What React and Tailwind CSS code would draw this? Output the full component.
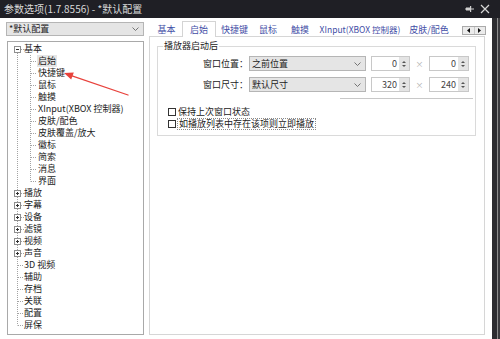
import React from 'react';

const TREE = [
  { t: '基本', lv: 0, box: 'open', first: true },
  { t: '启始', lv: 1, sel: true },
  { t: '快捷键', lv: 1 },
  { t: '鼠标', lv: 1 },
  { t: '触摸', lv: 1 },
  { t: 'XInput(XBOX 控制器)', lv: 1 },
  { t: '皮肤/配色', lv: 1 },
  { t: '皮肤覆盖/放大', lv: 1 },
  { t: '徽标', lv: 1 },
  { t: '简索', lv: 1 },
  { t: '消息', lv: 1 },
  { t: '界面', lv: 1, last: true },
  { t: '播放', lv: 0, box: 'closed' },
  { t: '字幕', lv: 0, box: 'closed' },
  { t: '设备', lv: 0, box: 'closed' },
  { t: '滤镜', lv: 0, box: 'closed' },
  { t: '视频', lv: 0, box: 'closed' },
  { t: '声音', lv: 0, box: 'closed' },
  { t: '3D 视频', lv: 0 },
  { t: '辅助', lv: 0 },
  { t: '存档', lv: 0 },
  { t: '关联', lv: 0 },
  { t: '配置', lv: 0 },
  { t: '屏保', lv: 0, last: true },
];

const TABS = [
  { t: '基本', w: 'w-[31px]' },
  { t: '启始', w: 'w-[34px]', sel: true },
  { t: '快捷键', w: 'w-[37px]' },
  { t: '鼠标', w: 'w-[30px]' },
  { t: '触摸', w: 'w-[34px]' },
  { t: 'XInput(XBOX 控制器)', w: 'w-[86px] text-[8.5px]' },
  { t: '皮肤/配色', w: 'w-[52px]' },
];

const DOT = { stroke: '#a3a3a3', strokeWidth: 1, strokeDasharray: '1 1' };

function Conn({ row }) {
  if (row.lv === 1) {
    return (
      <svg width="30" height="12" className="shrink-0">
        <line x1="9.5" y1="0" x2="9.5" y2="12" {...DOT} />
        <line x1="22.5" y1="0" x2="22.5" y2={row.last ? 6.5 : 12} {...DOT} />
        <line x1="23" y1="6.5" x2="29" y2="6.5" {...DOT} />
      </svg>
    );
  }
  return (
    <svg width="16" height="12" className="shrink-0">
      <line x1="9.5" y1={row.first ? 6 : 0} x2="9.5" y2={row.last ? 6.5 : 12} {...DOT} />
      {row.box ? (
        <>
          <rect x="6.5" y="3.5" width="6" height="6" fill="#fff" stroke="#8f8f8f" />
          <line x1="8" y1="6.5" x2="11" y2="6.5" stroke="#333" />
          {row.box === 'closed' && <line x1="9.5" y1="5" x2="9.5" y2="8" stroke="#333" />}
          <line x1="13" y1="6.5" x2="16" y2="6.5" {...DOT} />
        </>
      ) : (
        <line x1="10" y1="6.5" x2="16" y2="6.5" {...DOT} />
      )}
    </svg>
  );
}

function Chevron() {
  return (
    <svg width="7" height="4" viewBox="0 0 7 4" className="shrink-0">
      <path d="M0.5 0.5 L3.5 3.5 L6.5 0.5" fill="none" stroke="#666" strokeWidth="0.9" />
    </svg>
  );
}

function Spinner({ value, w }) {
  return (
    <div className={`${w} h-[15px] flex border border-[#c8c8c8] bg-white`}>
      <div className="flex-1 text-right pr-[2px] leading-[13px] text-[#444]">{value}</div>
      <div className="w-[10px] bg-[#e4e4e4] flex flex-col items-center justify-center gap-[2px]">
        <svg width="4" height="2" viewBox="0 0 4 2"><path d="M0 2 L2 0 L4 2Z" fill="#555" /></svg>
        <svg width="4" height="2" viewBox="0 0 4 2"><path d="M0 0 L2 2 L4 0Z" fill="#555" /></svg>
      </div>
    </div>
  );
}

function FieldRow({ label, value, a, b }) {
  return (
    <div className="flex h-[15px] items-center">
      <div className="w-[90px] text-right leading-[15px] text-[#222]">{label}</div>
      <div className="ml-[1px] w-[117px] h-[15px] flex items-center justify-between bg-[#e5e5e5] border border-[#b5b5b5] pl-[2px] pr-[4px]">
        <span className="leading-[13px] text-[#222]">{value}</span>
        <Chevron />
      </div>
      <div className="ml-[5px]"><Spinner value={a} w="w-[39px]" /></div>
      <div className="w-[19px] text-center text-[#b0b0b0] text-[8px]">×</div>
      <Spinner value={b} w="w-[40px]" />
    </div>
  );
}

export default function App() {
  return (
    <div className="w-[500px] h-[339px] overflow-hidden flex flex-col bg-white font-['Noto_Sans_CJK_SC',sans-serif] text-[9px] text-[#1c1c1c]">
      {/* title bar */}
      <div className="h-[18px] shrink-0 bg-[#1f1f25] flex items-center justify-between pl-[4px] pr-[10px]">
        <span className="text-[10px] text-[#dadada] leading-[18px]">参数选项(1.7.8556) - *默认配置</span>
        <div className="flex items-center gap-[6px]">
          <svg width="9" height="7" viewBox="0 0 9 7">
            <rect x="1" y="1.5" width="4" height="3" fill="#cfcfcf" />
            <rect x="5" y="0" width="1.2" height="6" fill="#cfcfcf" />
            <rect x="6" y="2.5" width="3" height="1" fill="#cfcfcf" />
            <rect x="0" y="2.5" width="1" height="1" fill="#cfcfcf" />
          </svg>
          <svg width="10" height="10" viewBox="0 0 10 10">
            <path d="M1 1 L9 9 M9 1 L1 9" stroke="#d6d6d6" strokeWidth="1.2" />
          </svg>
        </div>
      </div>

      <div className="flex flex-1">
        <div className="w-[492px] flex relative">
          {/* left column */}
          <div className="w-[149px] pl-[6px] pt-[4px] shrink-0">
            <div className="w-[138px] h-[14px] flex items-center justify-between bg-[#e5e5e5] border border-[#b5b5b5] pl-[2px] pr-[4px]">
              <span className="leading-[12px] text-[#222]">*默认配置</span>
              <Chevron />
            </div>
            <div className="mt-[5px] ml-[1px] w-[137px] h-[294px] border border-[#a9a9a9] pt-[1px] bg-white">
              {TREE.map((r, i) => (
                <div key={i} className="h-[12px] flex items-center">
                  <Conn row={r} />
                  <span className={`leading-[12px] whitespace-nowrap ${r.sel ? 'bg-[#e6e6e6] -ml-[1px] px-[1px]' : ''}`}>{r.t}</span>
                </div>
              ))}
            </div>
          </div>

          {/* red arrow annotation */}
          <svg className="absolute left-0 top-0 pointer-events-none" width="150" height="120" viewBox="0 18 150 120">
            <line x1="72" y1="75.8" x2="128" y2="95" stroke="#e8423c" strokeWidth="1.3" strokeLinecap="round" />
            <path d="M64 73 L71.2 79.4 L73.8 72.4Z" fill="#e8423c" />
          </svg>

          {/* right column */}
          <div className="w-[338px] pt-[3px] shrink-0">
            <div className="h-[15px] flex items-end pl-[2px]">
              {TABS.map((t) =>
                t.sel ? (
                  <div key={t.t} className={`${t.w} h-[16px] -mb-[1px] relative z-10 bg-white border border-b-0 border-[#d4d4d4] flex items-center justify-center text-[#3f4ea6] leading-[14px]`}>
                    {t.t}
                  </div>
                ) : (
                  <div key={t.t} className={`${t.w} h-[13px] flex items-center justify-center whitespace-nowrap text-[#3f4ea6] leading-[13px]`}>
                    {t.t}
                  </div>
                )
              )}
              <div className="ml-[7px] mb-[1px] h-[9px] w-[24px] flex border border-[#aaaaaa] bg-[#ebebeb]">
                <div className="flex-1 flex items-center justify-center border-r border-[#c8c8c8]">
                  <svg width="3" height="5" viewBox="0 0 3 5"><path d="M3 0 L0 2.5 L3 5Z" fill="#111" /></svg>
                </div>
                <div className="flex-1 flex items-center justify-center">
                  <svg width="3" height="5" viewBox="0 0 3 5"><path d="M0 0 L3 2.5 L0 5Z" fill="#111" /></svg>
                </div>
              </div>
            </div>

            <div className="w-[336px] h-[299px] border border-[#d6d6d6] bg-white">
              <div className="ml-[7px] mt-[9px] w-[319px] h-[90px] border border-[#dadada] relative">
                <span className="absolute -top-[7px] left-[5px] px-[1px] bg-white leading-[12px] text-[#222]">播放器启动后</span>
                <div className="pt-[9px] flex flex-col gap-[6px]">
                  <FieldRow label="窗口位置：" value="之前位置" a="0" b="0" />
                  <FieldRow label="窗口尺寸：" value="默认尺寸" a="320" b="240" />
                </div>
                <div className="mt-[6px] ml-[182px] w-[133px] h-px bg-[#c8c8c8]" />
                <div className="mt-[8px] h-[10px] flex items-center pl-[10px]">
                  <div className="w-[8px] h-[8px] border border-[#333] bg-white" />
                  <span className="ml-[2px] leading-[10px] text-[#222]">保持上次窗口状态</span>
                </div>
                <div className="mt-[1px] h-[12px] flex items-center pl-[10px]">
                  <div className="w-[8px] h-[8px] border border-[#333] bg-white" />
                  <span className="ml-[1px] border border-dotted border-[#8a8a8a] px-[1px] leading-[10px] text-[#222]">如播放列表中存在该项则立即播放</span>
                </div>
              </div>
            </div>
          </div>
        </div>

        {/* dark window edge */}
        <div className="w-[8px] flex">
          <div className="w-[5px] bg-[#2c2c30]" />
          <div className="w-[1px] bg-[#8e8e8e]" />
          <div className="w-[2px] bg-[#3a3a3e]" />
        </div>
      </div>
    </div>
  );
}
